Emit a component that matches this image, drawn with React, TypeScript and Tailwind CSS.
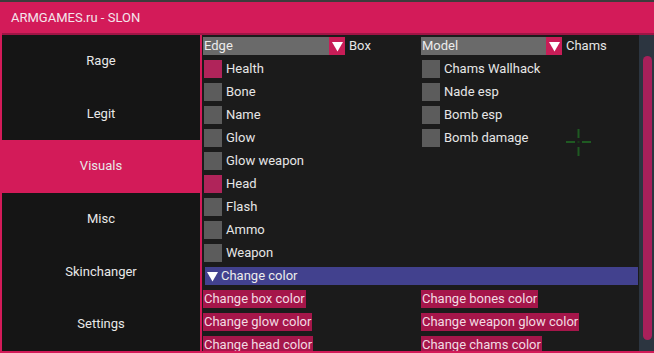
const tabs = ["Rage", "Legit", "Visuals", "Misc", "Skinchanger", "Settings"];

const leftChecks: [string, boolean][] = [
  ["Health", true],
  ["Bone", false],
  ["Name", false],
  ["Glow", false],
  ["Glow weapon", false],
  ["Head", true],
  ["Flash", false],
  ["Ammo", false],
  ["Weapon", false],
];

const rightChecks: [string, boolean][] = [
  ["Chams Wallhack", false],
  ["Nade esp", false],
  ["Bomb esp", false],
  ["Bomb damage", false],
];

const buttons = [
  ["Change box color", "Change bones color"],
  ["Change glow color", "Change weapon glow color"],
  ["Change head color", "Change chams color"],
];

function Tri({ className }: { className?: string }) {
  return (
    <svg viewBox="0 0 10 10" className={className}>
      <polygon points="0,1 10,1 5,9.5" fill="#ffffff" />
    </svg>
  );
}

function Combo({ value, label, width }: { value: string; label: string; width: string }) {
  return (
    <div className="flex h-[18px] items-center">
      <div className={`${width} h-[18px] bg-[#6a6a6a] pl-[1px] leading-[18px] text-[#ececec]`}>{value}</div>
      <div className="w-[16px] h-[18px] bg-[#c81d57] flex items-center justify-center">
        <Tri className="w-[11px] h-[11px]" />
      </div>
      <span className="ml-[4px] text-[#e6e6e6]">{label}</span>
    </div>
  );
}

function Check({ label, on }: { label: string; on: boolean }) {
  return (
    <div className="flex h-[18px] items-center gap-[4px] pl-[1px]">
      <div className={`w-[18px] h-[18px] ${on ? "bg-[#b0245a]" : "bg-[#5c5c5c]"}`} />
      <span className="text-[#e6e6e6]">{label}</span>
    </div>
  );
}

function Btn({ text }: { text: string }) {
  return (
    <div className="flex h-[18px]">
      <div className="h-[18px] leading-[18px] bg-[#a5164a] px-[1px] text-[#f2dbe3] whitespace-nowrap">{text}</div>
    </div>
  );
}

export default function App() {
  return (
    <div className="w-[654px] h-[353px] bg-[#3c3c3c] pt-[2px] overflow-hidden font-['Roboto',sans-serif] text-[13px]">
      <div className="h-[351px] flex flex-col border-l-2 border-b-2 border-[#d31b59]">
        <div className="h-[33px] shrink-0 bg-[#d31b59] border-b-2 border-[#9e1545] flex items-center pl-[9px] text-[#f3e6ec]">
          ARMGAMES.ru - SLON
        </div>

        <div className="flex flex-1 min-h-0">
          {/* tabs */}
          <div className="w-[200px] bg-[#151515] border-r-2 border-[#d31b59] flex flex-col">
            {tabs.map((t) => (
              <div
                key={t}
                className={`flex-1 flex items-center justify-center pb-[1px] text-[#e8e8e8] ${t === "Visuals" ? "bg-[#d31b59]" : ""}`}
              >
                {t}
              </div>
            ))}
          </div>

          {/* content */}
          <div className="flex-1 flex bg-[#1b1b1b] relative">
            <div className="flex-1 flex flex-col gap-[5px] pl-[1px] pt-[2px] overflow-hidden">
              <div className="grid grid-cols-[218px_1fr]">
                <div className="flex flex-col gap-[5px]">
                  <Combo value="Edge" label="Box" width="w-[126px]" />
                  {leftChecks.map(([l, on]) => (
                    <Check key={l} label={l} on={on} />
                  ))}
                </div>
                <div className="flex flex-col gap-[5px]">
                  <Combo value="Model" label="Chams" width="w-[125px]" />
                  {rightChecks.map(([l, on]) => (
                    <Check key={l} label={l} on={on} />
                  ))}
                </div>
              </div>

              <div className="ml-[2px] mr-[1px] h-[18px] shrink-0 bg-[#42418e] flex items-center gap-[3px] pl-[2px] text-[#ececec]">
                <Tri className="w-[11px] h-[11px]" />
                <span>Change color</span>
              </div>

              {buttons.map(([a, b]) => (
                <div key={a} className="grid grid-cols-[218px_1fr] shrink-0">
                  <Btn text={a} />
                  <Btn text={b} />
                </div>
              ))}
            </div>

            {/* scrollbar */}
            <div className="w-[15px] bg-[#2c3540] pt-[21px] pb-[11px] pl-[4px] pr-[2px]">
              <div className="h-full rounded-[5px] bg-[#a8205a]" />
            </div>

            {/* crosshair overlay */}
            <svg className="absolute left-[364px] top-[94px] w-[25px] h-[27px]" viewBox="0 0 25 27">
              <g fill="#1f5a22">
                <rect x="0" y="12" width="9" height="2" />
                <rect x="16" y="12" width="9" height="2" />
                <rect x="11.5" y="0" width="2" height="9" />
                <rect x="11.5" y="18" width="2" height="9" />
                <rect x="11.5" y="12" width="2" height="2" fill="#183a18" />
              </g>
            </svg>
          </div>
        </div>
      </div>
    </div>
  );
}
